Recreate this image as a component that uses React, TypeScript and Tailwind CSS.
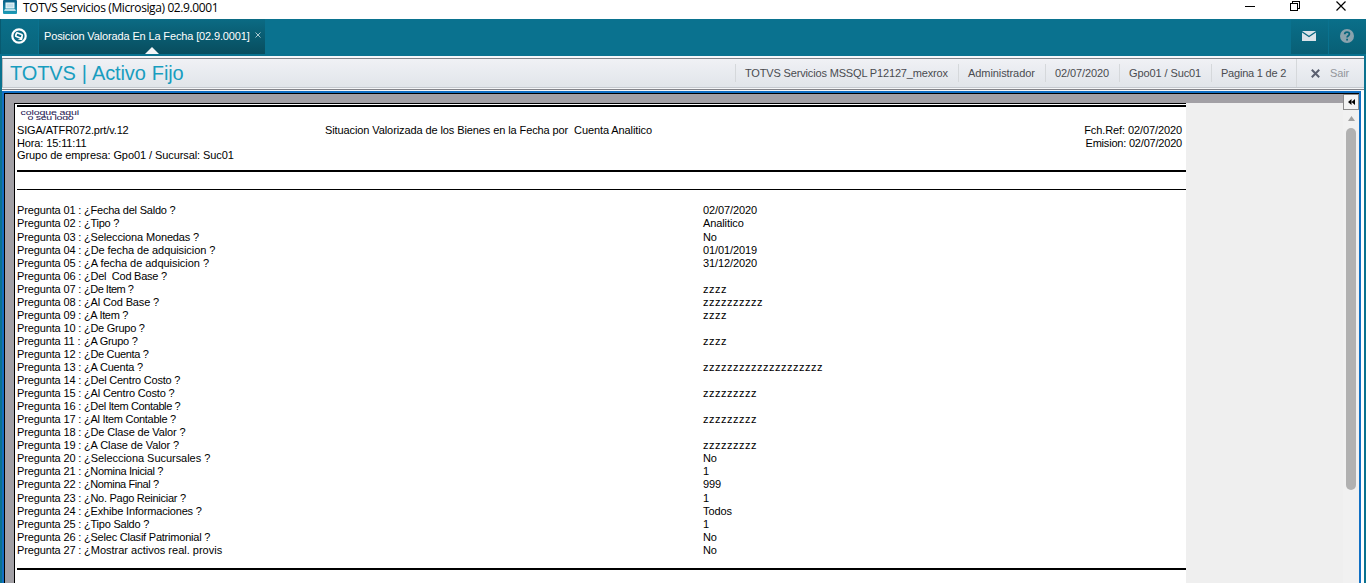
import type { ReactNode } from "react";

type Row = { q: string; a?: string; t: string };

const rows: Row[] = [
  { q: "¿Fecha del Saldo ?", a: "02/07/2020", t: "tracking-[-0.22px]" },
  { q: "¿Tipo ?", a: "Analitico", t: "tracking-[-0.25px]" },
  { q: "¿Selecciona Monedas ?", a: "No", t: "tracking-[-0.14px]" },
  { q: "¿De fecha de adquisicion ?", a: "01/01/2019", t: "tracking-[-0.08px]" },
  { q: "¿A fecha de adquisicion ?", a: "31/12/2020", t: "tracking-[-0.04px]" },
  { q: "¿Del  Cod Base ?", t: "tracking-[-0.25px]" },
  { q: "¿De Item ?", a: "zzzz", t: "tracking-[-0.5px]" },
  { q: "¿Al Cod Base ?", a: "zzzzzzzzzz", t: "tracking-[-0.14px]" },
  { q: "¿A Item ?", a: "zzzz", t: "tracking-[-0.35px]" },
  { q: "¿De Grupo ?", t: "tracking-[-0.27px]" },
  { q: "¿A Grupo ?", a: "zzzz", t: "tracking-[-0.27px]" },
  { q: "¿De Cuenta ?", t: "tracking-[-0.33px]" },
  { q: "¿A Cuenta ?", a: "zzzzzzzzzzzzzzzzzzzz", t: "tracking-[-0.2px]" },
  { q: "¿Del Centro Costo ?", t: "tracking-[-0.21px]" },
  { q: "¿Al Centro Costo ?", a: "zzzzzzzzz", t: "tracking-[-0.17px]" },
  { q: "¿Del Item Contable ?", t: "tracking-[-0.38px]" },
  { q: "¿Al Item Contable ?", a: "zzzzzzzzz", t: "tracking-[-0.28px]" },
  { q: "¿De Clase de Valor ?", t: "tracking-[-0.15px]" },
  { q: "¿A Clase de Valor ?", a: "zzzzzzzzz", t: "tracking-[-0.1px]" },
  { q: "¿Selecciona Sucursales ?", a: "No", t: "tracking-[-0.04px]" },
  { q: "¿Nomina Inicial ?", a: "1", t: "tracking-[-0.35px]" },
  { q: "¿Nomina Final ?", a: "999", t: "tracking-[-0.4px]" },
  { q: "¿No. Pago Reiniciar ?", a: "1", t: "tracking-[-0.28px]" },
  { q: "¿Exhibe Informaciones ?", a: "Todos", t: "tracking-[-0.17px]" },
  { q: "¿Tipo Saldo ?", a: "1", t: "tracking-[-0.23px]" },
  { q: "¿Selec Clasif Patrimonial ?", a: "No", t: "tracking-[-0.22px]" },
  { q: "¿Mostrar activos real. provis", a: "No", t: "tracking-normal" },
];

function TitleBar() {
  return (
    <div className="flex h-[19px] shrink-0 items-start bg-white">
      <svg className="ml-[3px] h-[14px] w-[14px] shrink-0" viewBox="0 0 14 14">
        <defs>
          <linearGradient id="appIcon" x1="0" y1="0" x2="0" y2="1">
            <stop offset="0" stopColor="#0a5f86" />
            <stop offset="1" stopColor="#1c9cb8" />
          </linearGradient>
        </defs>
        <rect width="14" height="14" rx="1" fill="url(#appIcon)" />
        <rect x="3" y="3" width="8" height="5" fill="#c3e0ea" stroke="#f1fafc" />
        <path d="M2 9h10l1 2H1z" fill="#b5dde8" />
      </svg>
      <span className="ml-[6px] mt-px font-['Open_Sans','Noto_Sans',sans-serif] text-[12px] leading-[14px] tracking-[-0.39px] text-black">
        TOTVS Servicios (Microsiga) 02.9.0001
      </span>
      <svg className="ml-auto mr-[16px] h-[13px] w-[106px]" viewBox="0 0 106 13" fill="none" stroke="#000" shapeRendering="crispEdges">
        <path d="M1 6.500h10" />
        <path d="M46.500 3.500h7v7h-7zM48.500 3.500v-2h7v7h-2" />
        <path d="M92.500 1.500l9 9M101.500 1.500l-9 9" shapeRendering="auto" strokeWidth="1.2" />
      </svg>
    </div>
  );
}

function NavBar() {
  return (
    <div className="flex h-[37px] shrink-0 bg-[#0a728f]">
      <div className="flex h-[35px] w-[38px] items-center justify-center border-l border-[#085a70] bg-linear-to-b from-[#0a6f8a] to-[#09657c] pr-[2px]">
        <svg className="mb-px h-4 w-4" viewBox="0 0 16 16" fill="none">
          <circle cx="8" cy="8" r="6.700" stroke="#fff" strokeWidth="2.200" />
          <rect x="4.900" y="5.600" width="6.200" height="3.800" rx="1" transform="rotate(20 8 7.500)" stroke="#fff" strokeWidth="1.700" />
          <path d="M10.500 8.500l1.200 1-.6 2.700-4.600-.6 3.200-1z" fill="#fff" />
        </svg>
      </div>
      <div className="relative ml-px flex h-[35px] w-[226px] items-center bg-linear-to-b from-[#0b6b84] to-[#084d5e]">
        <span className="ml-[5px] whitespace-nowrap text-[11px] tracking-[-0.14px] text-white">
          Posicion Valorada En La Fecha [02.9.0001]
        </span>
        <svg className="absolute left-[216px] top-[13px] h-[6px] w-[6px]" viewBox="0 0 6 6">
          <path d="M.5.5l5 5M5.500.5l-5 5" stroke="#a9c8d0" />
        </svg>
        <svg className="absolute bottom-0 left-[106px] h-[7px] w-[14px]" viewBox="0 0 14 7">
          <path d="M0 7L7 0l7 7z" fill="#f4f6f8" />
        </svg>
      </div>
      <div className="ml-auto flex h-[35px] w-[37px] items-center justify-center bg-linear-to-b from-[#0a6f8a] to-[#085f75] pb-px pr-px">
        <svg className="h-[10px] w-[14px]" viewBox="0 0 14 10">
          <path d="M0 0h14L7 4.800z" fill="#dbe3e9" />
          <path d="M0 1.500l7 4.800 7-4.800V10H0z" fill="#dbe3e9" />
        </svg>
      </div>
      <div className="ml-[1px] flex h-[35px] w-[37px] items-center justify-center bg-linear-to-b from-[#0a6f8a] to-[#085f75] pb-px pr-[2px]">
        <svg className="h-[14px] w-[14px]" viewBox="0 0 14 14">
          <circle cx="7" cy="7" r="7" fill="#8ba3ae" />
          <path d="M4.700 5.300c.1-3 4.700-2.900 4.700-.2 0 1.600-2.300 1.700-2.300 3.500M7.100 9.800v1.800" stroke="#09657c" strokeWidth="1.800" fill="none" />
        </svg>
      </div>
    </div>
  );
}

function Info({ w, children }: { w: string; children: ReactNode }) {
  return (
    <div className={`h-[18px] shrink-0 whitespace-nowrap border-l border-[#d5d8db] pl-[9px] leading-[18px] ${w}`}>{children}</div>
  );
}

function Toolbar() {
  return (
    <div className="ml-[2px] mr-[2px] flex h-[35px] shrink-0 flex-col bg-[#f6f7f9]">
      <div className="mt-[2px] h-px bg-[#828389]" />
      <div className="flex h-[28px] items-center border-l border-[#b4b6bb] bg-linear-to-b from-[#f0f1f5] to-[#e1e5ea]">
        <h1 className="ml-[7px] whitespace-nowrap text-[20px] leading-[28px] tracking-[-0.12px] text-[#189dbf] [word-spacing:0.7px]">TOTVS | Activo Fijo</h1>
        <div className="ml-auto flex items-center text-[11px] text-[#4a4b50]">
          <Info w="w-[223px] tracking-[-0.16px]">TOTVS Servicios MSSQL P12127_mexrox</Info>
          <Info w="w-[87px] tracking-[-0.08px]">Administrador</Info>
          <Info w="w-[74px] tracking-[-0.1px]">02/07/2020</Info>
          <Info w="w-[92px] tracking-[-0.1px]">Gpo01 / Suc01</Info>
          <Info w="w-[85px] tracking-[-0.22px]">Pagina 1 de 2</Info>
          <div className="flex h-[28px] w-[68px] items-center border-l border-[#d5d8db] text-[#94969c]">
            <svg className="ml-[14px] h-[9px] w-[9px]" viewBox="0 0 9 9">
              <path d="M.8.8l7.400 7.400M8.200.8L.8 8.200" stroke="#5b6070" strokeWidth="2" />
            </svg>
            <span className="ml-[10px] tracking-[-0.1px]">Sair</span>
          </div>
        </div>
      </div>
      <div className="h-px bg-[#c4c8ce]" />
      <div className="mt-px h-px bg-[#828389]" />
    </div>
  );
}

function ReportPage() {
  return (
    <div className="flex w-[1172px] shrink-0 flex-col border-l border-t border-black bg-white pl-[2px] text-[11px] leading-[13px] text-black">
      <div className="mt-px h-[2px] shrink-0 bg-black" />
      <svg className="mt-[2px] ml-[3px] h-[11px] w-[62px] shrink-0" viewBox="0 0 62 11" fontFamily="Liberation Sans, sans-serif" fill="#1c1550">
        <text transform="translate(0.500 5.600) scale(1.25 .82)" fontSize="8.500" textLength="47">coloque aqui</text>
        <text transform="translate(7.500 10.500) scale(1.25 .75)" fontSize="8.500" textLength="37">o seu logo</text>
      </svg>
      <div className="mt-[4px] flex h-[13px] shrink-0">
        <span className="w-[308px] tracking-[-0.14px]">SIGA/ATFR072.prt/v.12</span>
        <span className="whitespace-pre tracking-[-0.098px]">Situacion Valorizada de los Bienes en la Fecha por  Cuenta Analitico</span>
        <span className="ml-auto mr-[4px] tracking-[-0.1px]">Fch.Ref: 02/07/2020</span>
      </div>
      <div className="flex h-[12px] shrink-0">
        <span className="tracking-[-0.12px]">Hora: 15:11:11</span>
        <span className="ml-auto mr-[4px] tracking-[-0.2px]">Emision: 02/07/2020</span>
      </div>
      <div className="h-[13px] shrink-0 tracking-[-0.08px]">Grupo de empresa: Gpo01 / Sucursal: Suc01</div>
      <div className="mt-[8px] h-[2px] shrink-0 bg-black" />
      <div className="mt-[17px] h-px shrink-0 bg-black" />
      <div className="mt-[14px] flex shrink-0 flex-col">
        {rows.map((r, i) => (
          <div key={r.q} className={i === 2 || i === 22 ? "mt-px flex h-[13px]" : "flex h-[13px]"}>
            <span className="w-[67px] whitespace-pre tracking-[-0.14px]">{`Pregunta ${String(i + 1).padStart(2, "0")} :`}</span>
            <span className={`w-[619px] whitespace-pre ${r.t}`}>{r.q}</span>
            <span className={r.a?.startsWith("z") ? "tracking-[0.5px]" : "tracking-[-0.1px]"}>{r.a}</span>
          </div>
        ))}
      </div>
      <div className="mt-[11px] h-[2px] shrink-0 bg-black" />
    </div>
  );
}

export default function App() {
  return (
    <div className="flex h-[583px] w-[1366px] flex-col overflow-hidden bg-[#0a728f] font-['Liberation_Sans',Arial,sans-serif]">
      <TitleBar />
      <NavBar />
      <Toolbar />
      <div className="ml-[2px] mr-[2px] flex min-h-0 flex-1 bg-white pr-[3px]">
        <div className="flex min-w-0 flex-1 flex-col border-l-2 border-r-2 border-t-2 border-[#1170c4]">
          <div className="flex min-h-0 flex-1 border-l border-t border-black bg-[#a2a0a5]">
            <div className="flex min-w-0 flex-1 pl-[9px] pt-[9px]">
              <ReportPage />
              <div className="flex-1 bg-[#efefef]" />
            </div>
            <div className="flex w-[16px] shrink-0 flex-col items-center bg-[#f1f1f1]">
              <div className="flex h-[16px] w-[16px] items-center justify-center border border-[#8c8c8c] bg-[#f4f4f4]">
                <svg className="h-[6px] w-[7px]" viewBox="0 0 7 6">
                  <path d="M3.500 0v6L0 3zM7 0v6L3.500 3z" fill="#000" />
                </svg>
              </div>
              <svg className="mt-[6px] h-[5px] w-[7px]" viewBox="0 0 7 5">
                <path d="M0 5L3.500 0 7 5z" fill="#a0a0a0" />
              </svg>
              <div className="mt-[7px] h-[362px] w-[10px] rounded-[5px] bg-[#b1b1b1]" />
            </div>
          </div>
        </div>
      </div>
    </div>
  );
}
